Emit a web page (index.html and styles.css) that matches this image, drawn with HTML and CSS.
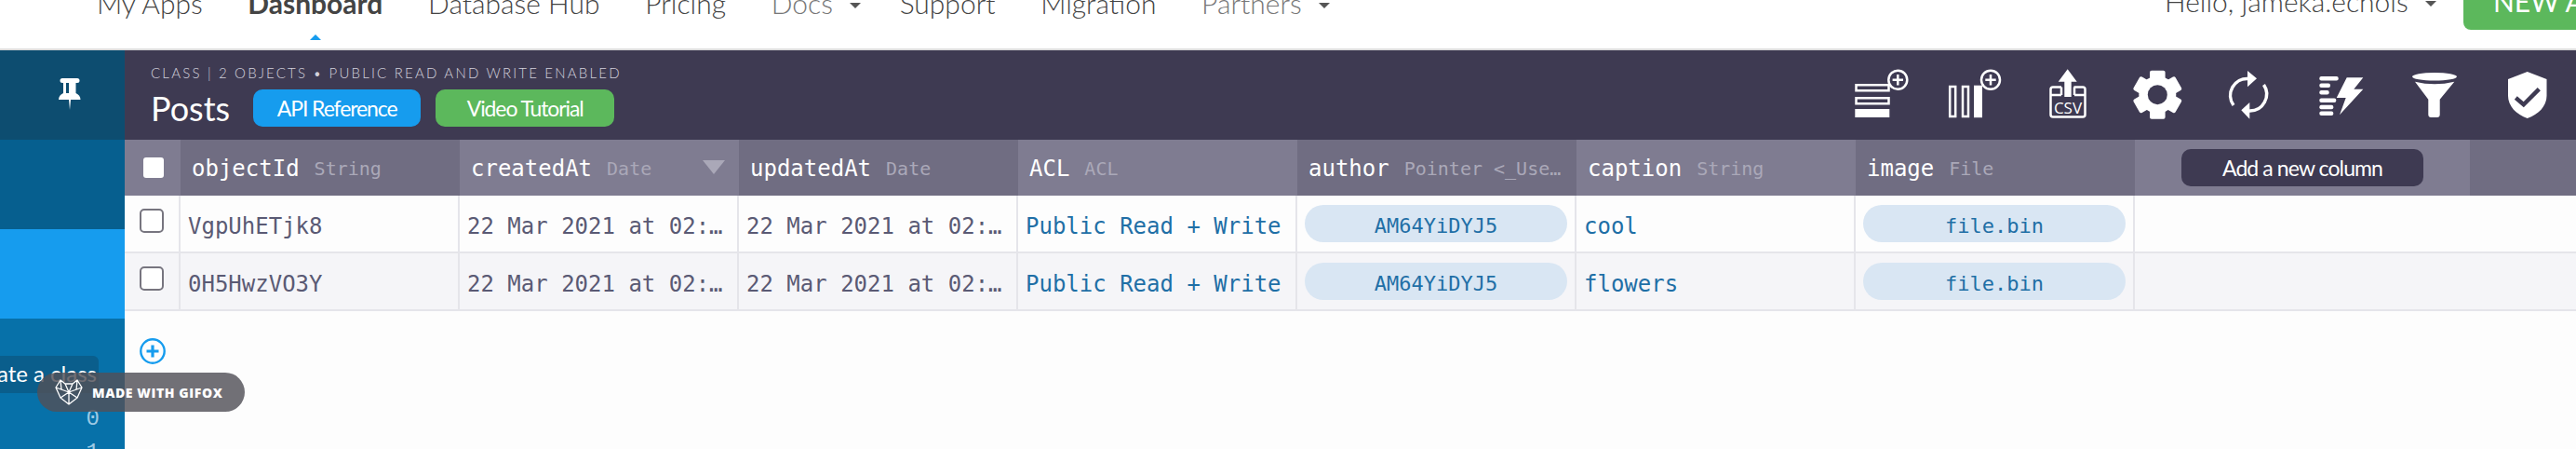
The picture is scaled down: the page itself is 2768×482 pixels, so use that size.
FILE: index.html
```html
<!DOCTYPE html>
<html lang="en">
<head>
    <meta charset="UTF-8">
    <title>Parse Dashboard</title>
    <link rel="stylesheet" href="styles.css">
</head>
<body>

<nav class="topnav">
    <a class="nav-item">My Apps</a>
    <a class="nav-item active">Dashboard</a>
    <a class="nav-item">Database Hub</a>
    <a class="nav-item">Pricing</a>
    <a class="nav-item muted">Docs <i class="caret"></i></a>
    <a class="nav-item">Support</a>
    <a class="nav-item">Migration</a>
    <a class="nav-item muted">Partners <i class="caret"></i></a>
    <div class="nav-right">
        <span class="nav-item hello">Hello, jameka.echols <i class="caret"></i></span>
        <a class="new-app">NEW APP</a>
    </div>
</nav>

<div class="main">
    <aside class="sidebar">
        <div class="pin-block">
            <svg width="24" height="34" viewBox="0 0 24 34"><path fill="#fff" d="M4 0h16a2 2 0 0 1 0 5h-1.500v11c3 1.500 5 3.500 5 7H13l-1 11-1-11H0c0-3.500 2-5.500 5-7V5H4a2 2 0 0 1 0-5z"/><path fill="#0d4d70" d="M8 5h3v11H8z"/></svg>
        </div>
        <div class="side-row"></div>
        <div class="side-row current"></div>
        <div class="side-rest">
            <div class="count">0</div>
            <div class="count">1</div>
        </div>
    </aside>

    <section class="browser">
        <div class="toolbar">
            <div class="title-block">
                <div class="subtitle">CLASS | 2 OBJECTS • PUBLIC READ AND WRITE ENABLED</div>
                <div class="title-row">
                    <h1>Posts</h1>
                    <a class="pill-btn blue">API Reference</a>
                    <a class="pill-btn green">Video Tutorial</a>
                </div>
            </div>
            <div class="tools">
                <svg class="tool" viewBox="0 0 99 70">
                    <path class="line" d="M22.500 24.200h35v6h-35zM22.500 38.200h35v6h-35z"/>
                    <rect class="solid" x="21.300" y="50" width="37" height="9"/>
                    <circle class="ring" cx="67.300" cy="18.700" r="10"/>
                    <path class="line" d="M67.300 13v11.400M61.600 18.700H73"/>
                </svg>
                <svg class="tool" viewBox="0 0 99 70">
                    <path class="line" d="M24.200 26h6v32h-6zM38 26h6v32h-6z"/>
                    <rect class="solid" x="50" y="24.700" width="9" height="34.500"/>
                    <circle class="ring" cx="68" cy="18.700" r="10"/>
                    <path class="line" d="M68 13v11.400M62.300 18.700h11.400"/>
                </svg>
                <svg class="tool" viewBox="0 0 99 70">
                    <path class="line" d="M45 26.500h-9a2.500 2.500 0 0 0-2.500 2.500v27a2.500 2.500 0 0 0 2.500 2.500h32a2.500 2.500 0 0 0 2.500-2.500V29a2.500 2.500 0 0 0-2.500-2.500h-9.500M33.500 35H45M59 35h11.500M45 26.500V35M59 26.500V35"/>
                    <path class="solid" d="M51.700 7.300l10 13.400h-6V37h-7.400V20.700h-6.600z"/>
                    <text class="csv" x="52" y="55">CSV</text>
                </svg>
                <svg class="tool" viewBox="0 0 99 70">
                    <circle class="solid" cx="49.300" cy="34.700" r="20"/>
                    <rect class="solid" x="41" y="8.700" width="16.600" height="52" rx="2"/>
                    <rect class="solid" x="41" y="8.700" width="16.600" height="52" rx="2" transform="rotate(60 49.300 34.700)"/>
                    <rect class="solid" x="41" y="8.700" width="16.600" height="52" rx="2" transform="rotate(120 49.300 34.700)"/>
                    <circle class="hole" cx="49.300" cy="34.700" r="10.500"/>
                </svg>
                <svg class="tool" viewBox="0 0 99 70">
                    <path class="arc" d="M32 46A18 18 0 0 1 48 17.500M64.500 24A18 18 0 0 1 49 52"/>
                    <path class="solid" d="M47 9l10 8.300-10 9zM49.300 43l-9 8.300 9 9.400z"/>
                </svg>
                <svg class="tool" viewBox="0 0 99 70">
                    <rect class="solid" x="25.300" y="15" width="20.400" height="4.600" rx="2"/>
                    <rect class="solid" x="25.300" y="22.400" width="11.700" height="4.600" rx="2"/>
                    <rect class="solid" x="25.300" y="30" width="10.400" height="4.600" rx="2"/>
                    <rect class="solid" x="25.300" y="38.400" width="18" height="4.600" rx="2"/>
                    <rect class="solid" x="25.300" y="45.700" width="15" height="4.600" rx="2"/>
                    <rect class="solid" x="25.300" y="52.400" width="15" height="4.600" rx="2"/>
                    <path class="solid" d="M54.700 16.300h17.600l-10 12.400h10L47 56.300l6.700-18.300h-10z"/>
                </svg>
                <svg class="tool" viewBox="0 0 99 70">
                    <ellipse class="solid" cx="50" cy="15.300" rx="24" ry="4.300"/>
                    <path class="solid" d="M29 20.700q21 5 42.300 0L55.700 39.700V56a3 3 0 0 1-3 3h-6.400a3 3 0 0 1-3-3V39.700z"/>
                </svg>
                <svg class="tool" viewBox="0 0 99 70">
                    <path class="solid" d="M50.700 10l20.800 8v18c0 11-9 20-20.800 24C39 56 30 47 30 36V18z"/>
                    <path class="check" d="M38.300 38l8.400 7.300 16.600-16.600"/>
                </svg>
            </div>
        </div>

        <div class="row head">
            <div class="cell light"><span class="head-check"></span></div>
            <div class="cell dark"><b>objectId</b><em>String</em></div>
            <div class="cell light"><b>createdAt</b><em>Date</em><i class="sort"></i></div>
            <div class="cell dark"><b>updatedAt</b><em>Date</em></div>
            <div class="cell light"><b>ACL</b><em>ACL</em></div>
            <div class="cell dark"><b>author</b><em>Pointer &lt;_Use…</em></div>
            <div class="cell light"><b>caption</b><em>String</em></div>
            <div class="cell dark"><b>image</b><em>File</em></div>
            <div class="cell light"><a class="add-col">Add a new column</a></div>
            <div class="cell dark"></div>
        </div>

        <div class="row data">
            <div class="cell"><span class="check-box"></span></div>
            <div class="cell">VgpUhETjk8</div>
            <div class="cell">22 Mar 2021 at 02:…</div>
            <div class="cell">22 Mar 2021 at 02:…</div>
            <div class="cell link">Public Read + Write</div>
            <div class="cell"><span class="chip">AM64YiDYJ5</span></div>
            <div class="cell link">cool</div>
            <div class="cell"><span class="chip">file.bin</span></div>
            <div class="cell end"></div>
            <div class="cell end"></div>
        </div>
        <div class="row data alt">
            <div class="cell"><span class="check-box"></span></div>
            <div class="cell">0H5HwzVO3Y</div>
            <div class="cell">22 Mar 2021 at 02:…</div>
            <div class="cell">22 Mar 2021 at 02:…</div>
            <div class="cell link">Public Read + Write</div>
            <div class="cell"><span class="chip">AM64YiDYJ5</span></div>
            <div class="cell link">flowers</div>
            <div class="cell"><span class="chip">file.bin</span></div>
            <div class="cell end"></div>
            <div class="cell end"></div>
        </div>

        <svg class="add-row" width="28" height="28" viewBox="0 0 28 28">
            <circle cx="14" cy="14" r="12.700" fill="none" stroke="#169cee" stroke-width="2.400"/>
            <path d="M14 7.500v13M7.500 14h13" stroke="#169cee" stroke-width="3.200"/>
        </svg>
    </section>
</div>

<div class="tooltip">Create a class</div>

<div class="gifox">
    <svg width="32" height="28" viewBox="0 0 32 28">
        <path d="M2 9L7 1l5 4h8l5-4 5 8-5 11-9 7-9-7zM12 5l4 9 4-9M2 9l14 5 14-5M7 20l9-6 9 6M16 14v13M7 1l1 11M25 1l-1 11" fill="none" stroke="#fff" stroke-width="1.300" stroke-linejoin="round"/>
    </svg>
    <span>MADE WITH GIFOX</span>
</div>

</body>
</html>
```

FILE: styles.css
```css
* {
    box-sizing: border-box;
}
html, body {
    margin: 0;
    height: 482px;
    overflow: hidden;
    background: #fdfdfd;
    font-family: Lato, "Open Sans", sans-serif;
}

/* top nav */
.topnav {
    display: flex;
    align-items: flex-start;
    height: 54px;
    padding-left: 104px;
    gap: 48.600px;
    background: #fff;
    border-bottom: 2px solid #dcdcdc;
    position: relative;
    overflow: hidden;
}
.nav-item {
    font-size: 30px;
    font-weight: 300;
    line-height: 34px;
    margin-top: -14px;
    color: #444;
    white-space: nowrap;
}
.nav-item.muted {
    color: #777;
}
.nav-item.hello {
    margin-top: -16px;
}
.nav-item.active {
    font-weight: 700;
    color: #444;
    position: relative;
}
.nav-item.active::after {
    content: "";
    position: absolute;
    left: 67px;
    top: 51px;
    border: 6px solid transparent;
    border-top: 0;
    border-bottom-color: #169cee;
}
.caret {
    display: inline-block;
    margin: 0 -7px 0 10px;
    vertical-align: 6px;
    border: 6px solid transparent;
    border-bottom: 0;
    border-top-color: #555;
}
.nav-right {
    display: flex;
    align-items: flex-start;
    margin-left: auto;
    gap: 36px;
    width: 442px;
    flex: none;
}
.new-app {
    flex: none;
    width: 200px;
    height: 48px;
    margin-top: -16px;
    padding-left: 32px;
    background: #5cb85c;
    color: #fff;
    border-radius: 8px;
    font-size: 30px;
    line-height: 34px;
}

.main {
    display: flex;
    height: 428px;
}

/* left side */
.sidebar {
    width: 134px;
    flex: none;
    display: flex;
    flex-direction: column;
    background: #0771a9;
}
.pin-block {
    height: 96px;
    flex: none;
    display: flex;
    align-items: flex-start;
    justify-content: center;
    padding: 30px 0 0 16px;
    background: #0d4d70;
}
.side-row {
    height: 96px;
    flex: none;
    background: #065f8f;
}
.side-row.current {
    background: #169cee;
}
.side-rest {
    flex: 1;
    min-height: 0;
    overflow: hidden;
    padding: 90px 27px 0 0;
    text-align: right;
}
.count {
    font-family: "Liberation Mono", monospace;
    font-size: 24px;
    line-height: 36px;
    color: #9cc9e4;
}

/* table area */
.browser {
    flex: 1;
    min-width: 0;
}
.toolbar {
    height: 96px;
    display: flex;
    justify-content: space-between;
    padding-left: 28px;
    background: #3e3a52;
    color: #fff;
}
.subtitle {
    margin-top: 16px;
    font-size: 15px;
    font-weight: 300;
    line-height: 16px;
    letter-spacing: 2.200px;
    color: #d3d1dc;
    white-space: nowrap;
}
.title-row {
    display: flex;
    align-items: center;
    margin-top: 10px;
}
h1 {
    margin: 0 25px 0 0;
    font-size: 36px;
    font-weight: 400;
    line-height: 40px;
}
.pill-btn {
    height: 40px;
    padding: 0;
    border-radius: 10px;
    font-size: 23px;
    line-height: 40px;
    letter-spacing: -1.100px;
    text-align: center;
    color: #fff;
}
.pill-btn.blue {
    width: 180px;
    margin-right: 16px;
    background: #169cee;
}
.pill-btn.green {
    width: 192px;
    background: #5cb85c;
}
.tools {
    display: flex;
    align-items: center;
    padding-right: 4px;
}
.tool {
    width: 99px;
    height: 70px;
    flex: none;
}
.line {
    fill: none;
    stroke: #fff;
    stroke-width: 2.500;
}
.solid {
    fill: #fff;
}
.ring {
    fill: #3e3a52;
    stroke: #fff;
    stroke-width: 2.500;
}
.hole {
    fill: #3e3a52;
}
.arc {
    fill: none;
    stroke: #fff;
    stroke-width: 3.500;
}
.check {
    fill: none;
    stroke: #3e3a52;
    stroke-width: 4.500;
}
.csv {
    fill: #fff;
    font-family: "Open Sans", sans-serif;
    font-size: 17px;
    text-anchor: middle;
}

.row {
    display: grid;
    grid-template-columns: 60px repeat(7, 300px) 360px 1fr;
}
.cell {
    display: flex;
    align-items: center;
    min-width: 0;
    white-space: nowrap;
    overflow: hidden;
    font-family: "DejaVu Sans Mono", monospace;
    font-size: 24px;
}
.head .cell {
    height: 60px;
    padding: 0 0 0 12px;
    position: relative;
    color: #fff;
}
.cell.light {
    background: #7f7c91;
}
.cell.dark {
    background: #706d82;
}
.cell b {
    font-weight: 400;
    padding-top: 2px;
}
.cell em {
    margin-left: 16px;
    padding-top: 2px;
    font-style: normal;
    font-size: 20px;
    color: #aaa8b8;
}
.head-check {
    width: 22px;
    height: 22px;
    margin-left: 8px;
    background: #fff;
    border-radius: 3px;
}
.sort {
    position: absolute;
    left: 261px;
    top: 22px;
    border: 12px solid transparent;
    border-bottom: 0;
    border-top: 15px solid #aaa8b8;
}
.add-col {
    width: 260px;
    height: 40px;
    margin-left: 38px;
    border-radius: 10px;
    background: #3e3a52;
    font-family: Lato, sans-serif;
    font-size: 23px;
    line-height: 40px;
    letter-spacing: -0.900px;
    text-align: center;
}
.data {
    background: #fdfdfd;
    border-bottom: 2px solid #e5e5ea;
}
.data.alt {
    background: #f5f5f8;
}
.data .cell {
    height: 60px;
    padding: 5px 0 0 8px;
    border-right: 2px solid #e5e5ea;
    color: #5a5a74;
}
.data .cell.end {
    border-right: 0;
}
.data .cell.link {
    color: #1f6fa6;
}
.check-box {
    width: 26px;
    height: 26px;
    margin: -12px 0 0 8px;
    border: 2px solid #77757f;
    border-radius: 5px;
    background: #fff;
}
.chip {
    width: 282px;
    height: 40px;
    margin: -5px 0 0 0;
    border-radius: 20px;
    background: #d9e6f3;
    color: #1f6fa6;
    font-size: 22px;
    line-height: 45px;
    text-align: center;
}
.add-row {
    display: block;
    margin: 29px 0 0 16px;
}

/* overlays */
.tooltip {
    position: absolute;
    left: -40px;
    top: 382px;
    width: 146px;
    height: 40px;
    padding-right: 16px;
    border-radius: 6px;
    background: #0a5e8c;
    color: #fff;
    font-size: 24px;
    line-height: 38px;
    text-align: right;
    white-space: nowrap;
}
.gifox {
    position: absolute;
    left: 40px;
    top: 400px;
    width: 223px;
    height: 42px;
    display: flex;
    align-items: center;
    gap: 9px;
    padding-left: 18px;
    border-radius: 21px;
    background: rgba(82, 80, 88, 0.82);
    color: #fff;
}
.gifox span {
    font-family: "Open Sans", sans-serif;
    font-size: 14px;
    font-weight: 800;
    letter-spacing: 0.600px;
    white-space: nowrap;
}
```
